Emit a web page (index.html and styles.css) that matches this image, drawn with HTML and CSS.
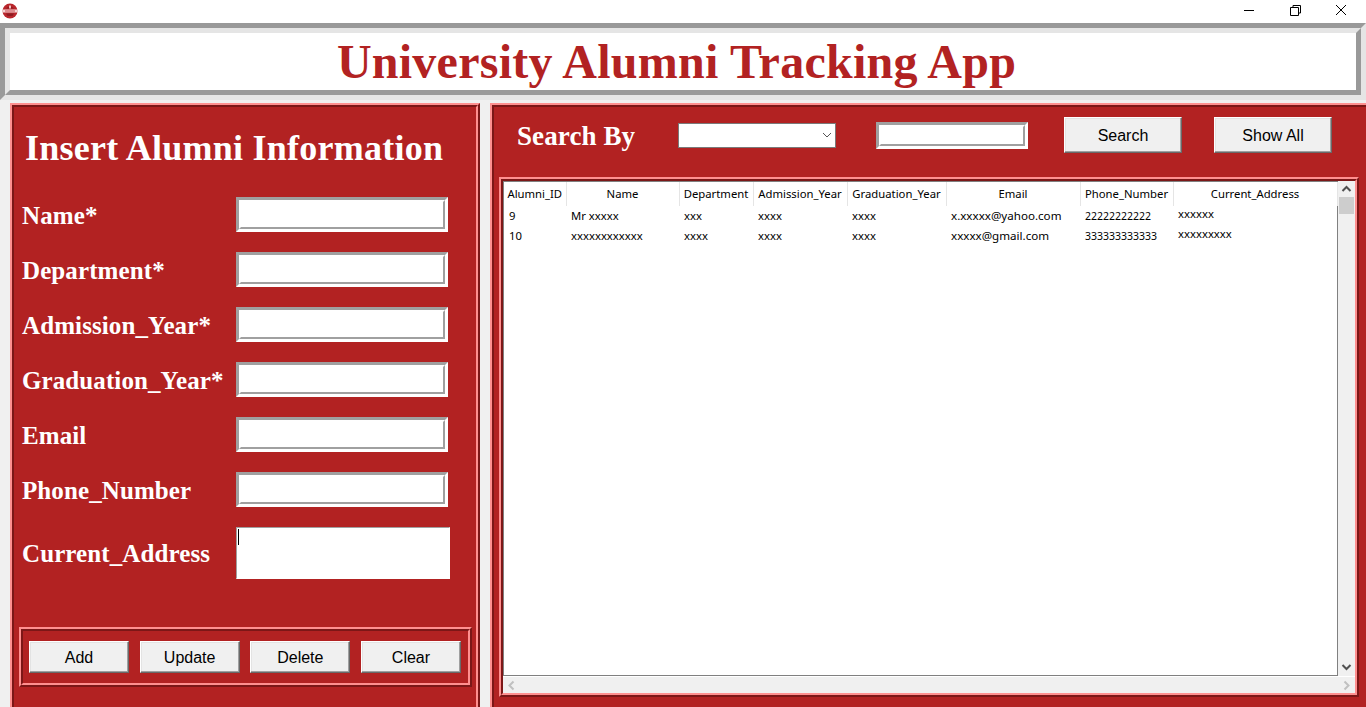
FILE: index.html
```html
<!DOCTYPE html>
<html>
    <head>
        <title>University Alumni Tracking App</title>
        <link rel="stylesheet" href="styles.css">
    </head>
    <body>
        <div class="titlebar">
            <svg class="app-icon" width="16" height="16" viewBox="0 0 16 16">
                <circle cx="8" cy="8" r="7.5" fill="#b9262c"/>
                <path d="M4 5.5 A5 5 0 0 1 12 5.5 Z" fill="#8e1a20"/>
                <rect x="7" y="2.5" width="2" height="3" fill="#f0c0c0"/>
                <rect x="0.5" y="6.5" width="15" height="3" fill="#f6d5d5"/>
                <rect x="3" y="7.5" width="10" height="1" fill="#c8474c"/>
                <path d="M4 10.5 H12 L10.5 13 H5.5 Z" fill="#8e1a20"/>
            </svg>
            <div class="win-buttons">
                <svg width="46" height="20" viewBox="0 0 46 20"><path d="M0 10.5 H10" stroke="#000" fill="none"/></svg>
                <svg width="46" height="20" viewBox="0 0 46 20"><path d="M0.5 7.5 H8.5 V15.5 H0.5 Z M3 7 V5.5 H10.5 V13 H9" stroke="#000" fill="none"/></svg>
                <svg width="10" height="20" viewBox="0 0 10 20"><path d="M0 5 L10 15 M10 5 L0 15" stroke="#000" fill="none"/></svg>
            </div>
        </div>

        <div class="header">
            <div class="header-in">
                <h1>University Alumni Tracking App</h1>
            </div>
        </div>

        <div class="main">
            <div class="panel left-panel">
                <div class="ridge-in left-in">
                    <h2>Insert Alumni Information</h2>
                    <form class="alumni-form">
                        <label>Name*</label>
                        <span class="entry"><input type="text"></span>
                        <label>Department*</label>
                        <span class="entry"><input type="text"></span>
                        <label>Admission_Year*</label>
                        <span class="entry"><input type="text"></span>
                        <label>Graduation_Year*</label>
                        <span class="entry"><input type="text"></span>
                        <label>Email</label>
                        <span class="entry"><input type="text"></span>
                        <label>Phone_Number</label>
                        <span class="entry"><input type="text"></span>
                        <label>Current_Address</label>
                        <div class="address">
                            <textarea></textarea>
                            <span class="caret"></span>
                        </div>
                    </form>
                    <div class="panel btn-frame">
                        <div class="ridge-in btn-row">
                            <button class="btn" type="button">Add</button>
                            <button class="btn" type="button">Update</button>
                            <button class="btn" type="button">Delete</button>
                            <button class="btn" type="button">Clear</button>
                        </div>
                    </div>
                </div>
            </div>

            <div class="panel right-panel">
                <div class="ridge-in right-in">
                    <div class="search-row">
                        <span class="search-label">Search By</span>
                        <div class="combo">
                            <svg width="10" height="6" viewBox="0 0 10 6"><path d="M1 1 L5 5 L9 1" stroke="#555" fill="none"/></svg>
                        </div>
                        <span class="entry search-entry"><input type="text"></span>
                        <button class="btn big-btn search-btn" type="button">Search</button>
                        <button class="btn big-btn showall-btn" type="button">Show All</button>
                    </div>

                    <div class="panel tree-frame">
                        <div class="ridge-in tree-in">
                            <div class="tree-row">
                                <div class="tree">
                                    <table>
                                        <colgroup>
                                            <col class="c-id"><col class="c-name"><col class="c-dept"><col class="c-adm">
                                            <col class="c-grad"><col class="c-email"><col class="c-phone"><col class="c-addr">
                                        </colgroup>
                                        <tr>
                                            <th>Alumni_ID</th><th>Name</th><th>Department</th><th>Admission_Year</th>
                                            <th>Graduation_Year</th><th>Email</th><th>Phone_Number</th><th>Current_Address</th>
                                        </tr>
                                        <tr>
                                            <td>9</td><td>Mr xxxxx</td><td>xxx</td><td>xxxx</td>
                                            <td>xxxx</td><td class="email">x.xxxxx@yahoo.com</td><td class="phone">22222222222</td><td class="addr">xxxxxx</td>
                                        </tr>
                                        <tr>
                                            <td>10</td><td>xxxxxxxxxxxx</td><td>xxxx</td><td>xxxx</td>
                                            <td>xxxx</td><td class="email">xxxxx@gmail.com</td><td class="phone">333333333333</td><td class="addr">xxxxxxxxx</td>
                                        </tr>
                                    </table>
                                </div>
                                <div class="vscroll">
                                    <svg class="arrow" width="17" height="16" viewBox="0 0 17 16"><path d="M4.5 10 L8.5 6 L12.5 10" stroke="#505050" stroke-width="2" fill="none"/></svg>
                                    <div class="thumb"></div>
                                    <svg class="arrow" width="17" height="16" viewBox="0 0 17 16"><path d="M4.5 5 L8.5 9 L12.5 5" stroke="#505050" stroke-width="2" fill="none"/></svg>
                                </div>
                            </div>
                            <div class="hscroll">
                                <svg width="17" height="17" viewBox="0 0 17 17"><path d="M10.5 4.5 L6.5 8.5 L10.5 12.5" stroke="#c0c0c0" stroke-width="2" fill="none"/></svg>
                                <svg width="17" height="17" viewBox="0 0 17 17"><path d="M6.5 4.5 L10.5 8.5 L6.5 12.5" stroke="#c0c0c0" stroke-width="2" fill="none"/></svg>
                            </div>
                        </div>
                    </div>
                </div>
            </div>
        </div>
    </body>
</html>
```

FILE: styles.css
```css
html, body {
    margin: 0;
    height: 707px;
    overflow: hidden;
}
body {
    background-color: #f0f0f0;
    font-family: "Liberation Serif", serif;
}

/* window title bar */
.titlebar {
    height: 23px;
    background-color: #fff;
    display: flex;
    justify-content: space-between;
}
.app-icon {
    margin: 3px 0 0 2px;
}
.win-buttons {
    display: flex;
    padding-right: 20px;
}

/* title */
.header {
    height: 77px;
    box-sizing: border-box;
    border: 5px solid;
    border-color: #999 #e5e5e5 #e5e5e5 #999;
}
.header-in {
    height: 100%;
    box-sizing: border-box;
    border: 5px solid;
    border-color: #e5e5e5 #999 #999 #e5e5e5;
    background-color: #fff;
    text-align: center;
    padding: 1px 13px 0 0;
}
h1 {
    margin: 0;
    font-size: 48px;
    line-height: 56px;
    color: #b22222;
    letter-spacing: 0.25px;
}

/* two-tone frames */
.panel {
    box-sizing: border-box;
    border: 2px solid;
    border-color: #ff8f8f #7c1717 #7c1717 #ff8f8f;
    background-color: #b22222;
}
.ridge-in {
    box-sizing: border-box;
    border: 2px solid;
    border-color: #7c1717 #ff8f8f #ff8f8f #7c1717;
    height: 100%;
}

.main {
    display: flex;
    padding: 3px 0 0 10px;
    gap: 10px;
}
.left-panel {
    flex: none;
    width: 470px;
    height: 612px;
}
.right-panel {
    flex: none;
    width: 880px;
    height: 612px;
}

/* left form */
h2 {
    margin: 0 0 8px 11px;
    font-size: 36px;
    line-height: 82px;
    color: #fff;
    letter-spacing: 0.25px;
}
.alumni-form {
    display: grid;
    grid-template-columns: 214px 214px;
    row-gap: 20px;
    padding-left: 8px;
    align-items: center;
}
label {
    font-size: 25px;
    font-weight: bold;
    color: #fff;
    padding-top: 2px;
    letter-spacing: 0.1px;
}
.entry {
    display: block;
    box-sizing: border-box;
    width: 212px;
    height: 35px;
    border: 3px solid;
    border-color: #a0a0a0 #fff #fff #a0a0a0;
}
.entry input {
    display: block;
    box-sizing: border-box;
    width: 100%;
    height: 100%;
    margin: 0;
    padding: 0;
    border: 2px solid;
    border-color: #fff #a0a0a0 #a0a0a0 #fff;
    background-color: #fff;
    outline: none;
}
.address {
    position: relative;
    height: 52px;
}
textarea {
    display: block;
    box-sizing: border-box;
    width: 214px;
    height: 52px;
    margin: 0;
    padding: 0;
    border: 1px solid;
    border-color: #a0a0a0 #fff #fff #a0a0a0;
    background-color: #fff;
    resize: none;
    outline: none;
}
.caret {
    position: absolute;
    left: 2px;
    top: 2px;
    width: 1px;
    height: 16px;
    background-color: #000;
}

/* buttons */
.btn-frame {
    width: 453px;
    height: 60px;
    margin: 48px 0 0 5px;
}
.btn-row {
    display: flex;
    justify-content: space-between;
    padding: 10px 7px 0 6px;
}
.btn {
    box-sizing: border-box;
    width: 100px;
    height: 32px;
    padding: 2px 0 0;
    border: 1px solid;
    border-color: #fff #696969 #696969 #fff;
    box-shadow: inset -1px -1px 0 #a0a0a0, inset 1px 1px 0 #e3e3e3;
    background-color: #f0f0f0;
    font-family: "Liberation Sans", sans-serif;
    font-size: 16px;
    color: #000;
}
.big-btn {
    width: 118px;
    height: 36px;
}

/* search row */
.search-row {
    display: flex;
    align-items: center;
    height: 56px;
    margin-bottom: 14px;
    padding-left: 23px;
}
.search-label {
    width: 161px;
    padding-top: 2px;
    font-size: 27px;
    font-weight: bold;
    letter-spacing: 0.1px;
    color: #fff;
}
.combo {
    box-sizing: border-box;
    width: 158px;
    height: 25px;
    border: 1px solid #7a7a7a;
    background-color: #fff;
    display: flex;
    align-items: center;
    justify-content: flex-end;
    padding-right: 3px;
}
.search-entry {
    width: 152px;
    height: 27px;
    margin-left: 40px;
}
.search-btn {
    margin-left: 36px;
}
.showall-btn {
    margin-left: 32px;
}

/* results table */
.tree-frame {
    width: 860px;
    height: 520px;
    margin-left: 5px;
}
.tree-in {
    display: flex;
    flex-direction: column;
}
.tree-row {
    display: flex;
    flex: 1;
    min-height: 0;
}
.tree {
    width: 835px;
    box-sizing: border-box;
    border: 1px solid #808080;
    background-color: #fff;
}
table {
    width: 833px;
    table-layout: fixed;
    border-collapse: collapse;
    font-family: "Noto Sans", sans-serif;
    font-size: 11.3px;
    color: #000;
}
.c-id { width: 62px; }
.c-name { width: 113px; }
.c-dept { width: 74px; }
.c-adm { width: 94px; }
.c-grad { width: 99px; }
.c-email { width: 134px; }
.c-phone { width: 93px; }
.c-addr { width: 164px; }
th {
    box-sizing: border-box;
    height: 24px;
    padding: 0 0 2px;
    font-weight: normal;
    text-align: center;
    border-right: 1px solid #e5e5e5;
    white-space: nowrap;
}
td {
    box-sizing: border-box;
    height: 20px;
    padding: 0 0 0 5px;
    line-height: 16px;
    white-space: nowrap;
}
td.email {
    font-size: 11.6px;
}
td.phone {
    font-size: 10.5px;
}
td.addr {
    padding-bottom: 4px;
}

/* scrollbars */
.vscroll {
    width: 17px;
    background-color: #f0f0f0;
    display: flex;
    flex-direction: column;
}
.arrow {
    display: block;
    flex-shrink: 0;
}
.thumb {
    height: 17px;
    margin: 0 1px;
    background-color: #cdcdcd;
    flex-shrink: 0;
    margin-bottom: auto;
}
.hscroll {
    height: 17px;
    box-sizing: border-box;
    background-color: #f0f0f0;
    border-top: 1px solid #fff;
    display: flex;
    justify-content: space-between;
    align-items: center;
}
```
